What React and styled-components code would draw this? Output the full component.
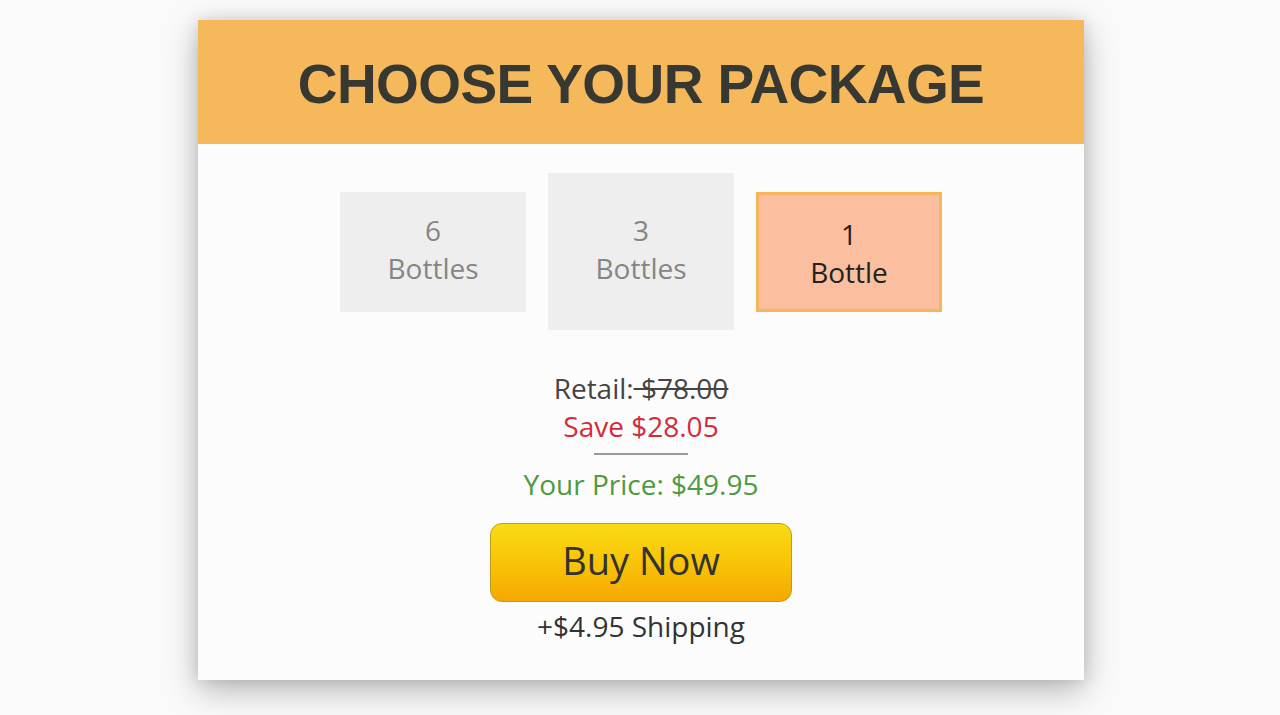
import React from 'react';
import styled, { createGlobalStyle } from 'styled-components';

const GlobalStyle = createGlobalStyle`
    body {
        margin: 0;
        background-color: #fafafa;
        font-family: 'Open Sans', 'Noto Sans', sans-serif;
    }
`

const Page = styled.div`
    width: 1280px;
    height: 715px;
    padding: 20px 0 0 2px;
    box-sizing: border-box;
    overflow: hidden;
`

const Card = styled.div`
    width: 886px;
    margin: 0 auto;
    background-color: #fcfcfc;
    box-shadow: 0 10px 32px rgba(0, 0, 0, 0.28), 0 0 14px rgba(0, 0, 0, 0.1);
`

const Header = styled.div`
    height: 124px;
    display: flex;
    align-items: center;
    justify-content: center;
    background-color: #f5b85a;
`

const Title = styled.h1`
    margin: 0;
    font-family: 'Liberation Sans', Arial, sans-serif;
    font-weight: 700;
    font-size: 55px;
    letter-spacing: -0.6px;
    color: #383833;
    padding-top: 4px;
`

const Body = styled.div`
    display: flex;
    flex-direction: column;
    align-items: center;
    padding: 29px 0 35px;
`

const Options = styled.div`
    display: flex;
    align-items: center;
    gap: 22px;
    height: 157px;
`

const Option = styled.div`
    width: 186px;
    height: ${props => props.tall ? '157px' : '120px'};
    box-sizing: border-box;
    display: flex;
    flex-direction: column;
    align-items: center;
    justify-content: center;
    font-size: 28px;
    line-height: 38px;
    background-color: ${props => props.active ? '#fbbfa0' : '#eeeeee'};
    border: ${props => props.active ? '3px solid #f5b55a' : 'none'};
    color: ${props => props.active ? '#222' : '#858585'};
    padding-top: ${props => props.active ? '2px' : '0'};
    padding-bottom: ${props => props.active ? '0' : '6px'};
`

const PriceLine = styled.div`
    font-size: 28px;
    line-height: 38px;
    color: ${props => props.color || '#444'};
`

const Strike = styled.span`
    text-decoration: line-through;
`

const Retail = styled(PriceLine)`
    margin-top: 39px;
`

const Divider = styled.div`
    width: 94px;
    height: 2px;
    background-color: #999;
    margin: 8px 0 10px;
`

const BuyButton = styled.button`
    margin-top: 20px;
    width: 302px;
    height: 79px;
    padding: 0 0 5px;
    border: 1px solid #c49a1c;
    border-radius: 12px;
    background: linear-gradient(to bottom, #f8dc12 0%, #f8c408 50%, #f6a800 100%);
    font-family: 'Open Sans', 'Noto Sans', sans-serif;
    font-size: 38px;
    color: #333;
    cursor: pointer;
`

const Shipping = styled(PriceLine)`
    margin-top: 5px;
    color: #333;
`

const packages = [
    { count: '6', label: 'Bottles' },
    { count: '3', label: 'Bottles', tall: true },
    { count: '1', label: 'Bottle', active: true },
];

export default function App() {
    return (
        <Page>
            <GlobalStyle />
            <Card>
                <Header>
                    <Title>CHOOSE YOUR PACKAGE</Title>
                </Header>
                <Body>
                    <Options>
                        {packages.map(p => (
                            <Option key={p.count} tall={p.tall} active={p.active}>
                                <span>{p.count}</span>
                                <span>{p.label}</span>
                            </Option>
                        ))}
                    </Options>
                    <Retail>Retail:<Strike> $78.00</Strike></Retail>
                    <PriceLine color="#d42a38">Save $28.05</PriceLine>
                    <Divider />
                    <PriceLine color="#4f9a3e">Your Price: $49.95</PriceLine>
                    <BuyButton>Buy Now</BuyButton>
                    <Shipping>+$4.95 Shipping</Shipping>
                </Body>
            </Card>
        </Page>
    );
}
